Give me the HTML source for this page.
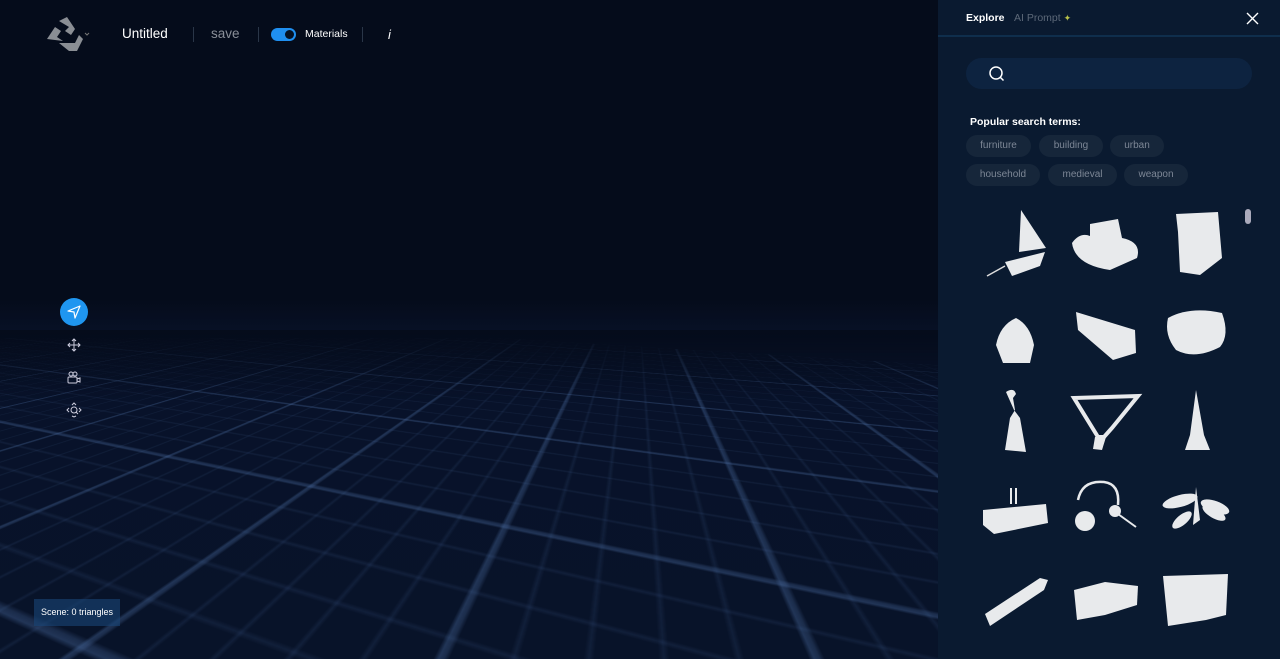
<!DOCTYPE html>
<html><head><meta charset="utf-8"><style>
*{margin:0;padding:0;box-sizing:border-box}
body{width:1280px;height:659px;overflow:hidden;background:#050c1b;font-family:"Liberation Sans",sans-serif;position:relative}
.scene{position:absolute;left:0;top:0;width:938px;height:659px;background:linear-gradient(#050c1b 0,#050c1b 300px,#08122a 345px,#081329 659px);overflow:hidden}
.fw{position:absolute;left:0;top:338px;width:938px;height:321px;overflow:hidden;perspective:450px;perspective-origin:50% 0}
.floor{position:absolute;left:-2000px;top:0;width:5000px;height:5000px;transform-origin:50% 0;transform:rotateX(80deg) rotateZ(20deg);
background:
repeating-linear-gradient(90deg,rgba(80,115,170,.26) 0 2px,transparent 2px 70px),
repeating-linear-gradient(0deg,rgba(80,115,170,.26) 0 2px,transparent 2px 70px),
repeating-linear-gradient(90deg,rgba(60,90,140,.16) 0 1px,transparent 1px 14px),
repeating-linear-gradient(0deg,rgba(60,90,140,.16) 0 1px,transparent 1px 14px)}
.fade{position:absolute;left:0;top:330px;width:938px;height:70px;background:linear-gradient(#050c1b,rgba(5,12,27,0))}
.t{position:absolute;top:27px;font-size:13px}
.sep{position:absolute;top:27px;width:1px;height:15px;background:#2a3648}
.panel{position:absolute;left:938px;top:0;width:342px;height:659px;background:#0a1a30}
.tabs{height:37px;border-bottom:2px solid #0f2e4c;position:relative}
.chip{position:absolute;height:22px;border-radius:11px;background:#16263a;color:#7d8796;font-size:10px;line-height:22px;text-align:center}
.tool{position:absolute;left:60px;width:28px;height:28px;display:flex;align-items:center;justify-content:center}
</style></head><body>
<div class="scene">
<div class="fw"><div class="floor"></div></div>
<div class="fade"></div>
</div>
<svg style="position:absolute;left:45px;top:17px" width="48" height="34" viewBox="0 0 48 34">
<path d="M14 4 L22 0 L30 12 L26 18 L20 14 L24 10 Z M2 22 L10 10 L16 14 L12 20 L18 24 Z M14 26 L30 26 L34 18 L38 22 L32 34 L24 34 Z" fill="#8a8e94"/>
<path d="M40 16 l2 2 l2 -2" stroke="#777" fill="none" stroke-width="1"/>
</svg>
<div class="t" style="left:122px;font-size:13.5px;color:#fff;top:26px">Untitled</div>
<div class="sep" style="left:193px"></div>
<div class="t" style="left:211px;color:#8a8f98;font-size:13.5px;top:26px">save</div>
<div class="sep" style="left:258px"></div>
<div style="position:absolute;left:271px;top:28px;width:25px;height:13px;border-radius:7px;background:#1f8ff0"><div style="position:absolute;right:2px;top:2px;width:9px;height:9px;border-radius:50%;background:#061224"></div></div>
<div class="t" style="left:305px;font-size:10.5px;top:28px;color:#fff">Materials</div>
<div class="sep" style="left:362px"></div>
<div class="t" style="left:388px;font-style:italic;font-size:13px;color:#fff">i</div>
<div class="tool" style="top:298px;border-radius:50%;background:#1f96f0"><svg width="14" height="14" viewBox="0 0 14 14"><path d="M13 1 L1 6 L7 7 L8 13 Z" fill="none" stroke="#fff" stroke-width="1.2" stroke-linejoin="round"/></svg></div>
<div class="tool" style="top:331px"><svg width="16" height="16" viewBox="0 0 16 16" fill="none" stroke="#ccd" stroke-width="1"><path d="M8 2v12M2 8h12M6 4l2-2 2 2M6 12l2 2 2-2M4 6l-2 2 2 2M12 6l2 2-2 2"/></svg></div>
<div class="tool" style="top:364px"><svg width="16" height="16" viewBox="0 0 16 16" fill="none" stroke="#ccd" stroke-width="1"><rect x="2" y="7" width="9" height="6" rx="1"/><circle cx="5" cy="4" r="2"/><circle cx="9" cy="4" r="2"/><path d="M11 9l3-1v4l-3-1"/></svg></div>
<div class="tool" style="top:396px"><svg width="16" height="16" viewBox="0 0 16 16" fill="none" stroke="#ccd" stroke-width="1"><circle cx="8" cy="8" r="3"/><path d="M10 10l2 2M6 3l2-2 2 2M6 14l2 1 2-1M3 6l-2 2 2 2M13 6l2 2-2 2"/></svg></div>
<div style="position:absolute;left:34px;top:599px;width:86px;height:27px;background:rgba(25,70,120,.6);color:#fff;font-size:9px;line-height:27px;text-align:center">Scene: 0 triangles</div>

<div class="panel">
<div class="tabs">
<div style="position:absolute;left:28px;top:12px;color:#fff;font-size:10.5px;font-weight:bold">Explore</div>
<div style="position:absolute;left:76px;top:12px;color:#5c6878;font-size:10.5px">AI Prompt <span style="color:#b8c24a;font-size:9px">✦</span></div>
<svg style="position:absolute;left:308px;top:12px" width="13" height="13" viewBox="0 0 13 13"><path d="M1 1L12 12M12 1L1 12" stroke="#fff" stroke-width="1.4"/></svg>
</div>
<div style="position:absolute;left:28px;top:58px;width:286px;height:31px;border-radius:16px;background:#0d2340"><svg style="position:absolute;left:22px;top:7px" width="17" height="17" viewBox="0 0 17 17" fill="none" stroke="#fff" stroke-width="1.5"><circle cx="8" cy="8" r="6"/><path d="M12.5 12.5l3 3"/></svg></div>
<div style="position:absolute;left:32px;top:116px;color:#fff;font-size:10.5px;font-weight:bold">Popular search terms:</div>
<div class="chip" style="left:28px;top:135px;width:65px">furniture</div>
<div class="chip" style="left:101px;top:135px;width:64px">building</div>
<div class="chip" style="left:172px;top:135px;width:54px">urban</div>
<div class="chip" style="left:28px;top:164px;width:74px">household</div>
<div class="chip" style="left:110px;top:164px;width:69px">medieval</div>
<div class="chip" style="left:186px;top:164px;width:64px">weapon</div>
<div style="position:absolute;left:307px;top:209px;width:6px;height:15px;border-radius:3px;background:#aab"></div>
<svg style="position:absolute;left:0;top:200px" width="342" height="459" viewBox="938 200 342 459" fill="#e8eaec">
<path d="M1021 210 L1046 248 L1019 252 Z"/><path d="M1005 262 L1045 252 L1040 266 L1012 276 Z"/><path d="M987 276 L1005 266" stroke="#ddd" stroke-width="1.5"/>
<path d="M1090 224 L1118 219 L1122 238 Q1142 242 1137 258 L1110 270 Q1075 265 1072 243 Q1080 232 1090 236Z"/>
<path d="M1176 214 L1218 212 L1222 258 L1200 275 L1180 272 L1178 232Z"/>
<path d="M1016 303 L1016 318 Q1000 325 996 345 L1003 363 L1030 363 L1034 345 Q1030 325 1016 318Z"/>
<path d="M1076 312 L1135 330 L1136 353 L1113 360 L1078 330Z"/>
<path d="M1168 318 Q1190 306 1222 313 Q1230 335 1220 347 Q1195 360 1176 350 Q1164 335 1168 318Z"/>
<path d="M1006 392 Q1014 387 1016 394 L1013 398 L1015 410 L1010 418 L1005 450 L1026 452 L1020 418 L1014 410Z"/>
<path d="M1074 398 L1138 396 L1112 428 L1104 437 L1098 437 Z" fill="none" stroke="#e8eaec" stroke-width="4"/><path d="M1095 437 L1106 437 L1102 450 L1093 449Z"/>
<path d="M1196 390 L1204 435 L1210 450 L1185 450 L1190 435Z"/>
<path d="M983 510 L1046 504 L1048 523 L994 534 L983 525Z"/><rect x="1010" y="488" width="2" height="16"/><rect x="1015" y="488" width="2" height="16"/>
<path d="M1078 500 Q1082 480 1104 482 Q1120 484 1118 505" fill="none" stroke="#e8eaec" stroke-width="2.5"/><circle cx="1085" cy="521" r="10"/><circle cx="1115" cy="511" r="6"/><path d="M1118 514 L1136 527" stroke="#e8eaec" stroke-width="2"/>
<ellipse cx="1180" cy="501" rx="18" ry="6" transform="rotate(-15 1180 501)"/><ellipse cx="1215" cy="507" rx="15" ry="6" transform="rotate(20 1215 507)"/><ellipse cx="1182" cy="520" rx="12" ry="5" transform="rotate(-40 1182 520)"/><ellipse cx="1214" cy="513" rx="13" ry="5" transform="rotate(30 1214 513)"/><path d="M1196 487 L1200 520 L1193 525 Z"/>
<path d="M985 614 L1040 578 L1048 580 L1044 590 L990 626Z"/>
<path d="M1074 590 L1105 582 L1138 586 L1137 605 L1105 615 L1077 620Z"/>
<path d="M1163 576 L1228 574 L1226 615 L1206 620 L1168 626Z"/>
</svg>
</div>
</body></html>
